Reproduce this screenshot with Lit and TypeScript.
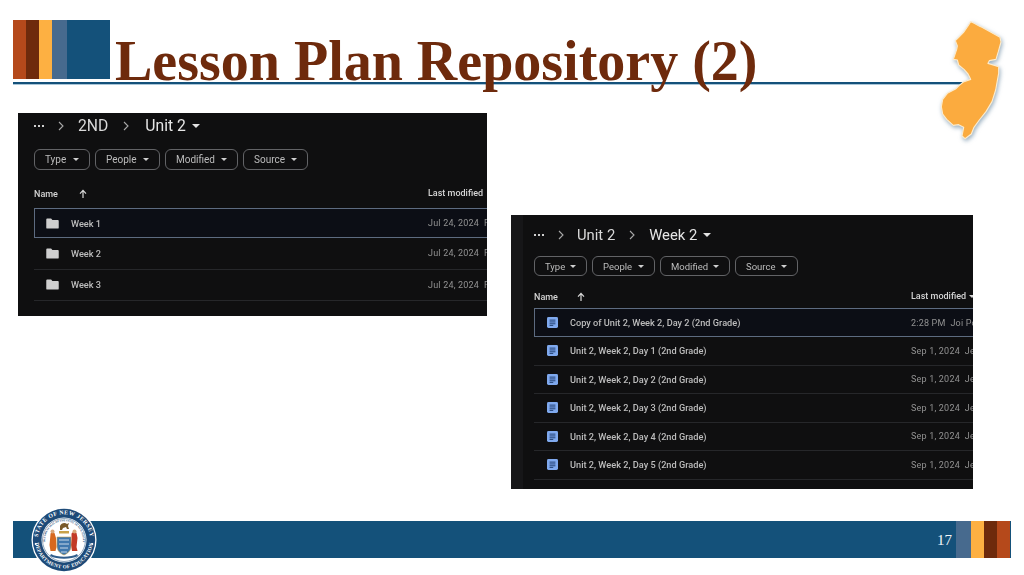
import { LitElement, html, css, svg } from "lit";
import { customElement } from "lit/decorators.js";

const chev = html`<svg class="chev" viewBox="0 0 8 12"><path d="M2 2l4 4-4 4" fill="none" stroke="#a8a8a8" stroke-width="1.1"/></svg>`;
const caret = html`<svg class="caret" viewBox="0 0 8 4"><path d="M0 0h8L4 4z" fill="currentColor"/></svg>`;
const up = html`<svg class="up" viewBox="0 0 10 10"><path d="M5 9V2M2 4.600L5 1.400l3 3.200" fill="none" stroke="#d8d8d8" stroke-width="1.2"/></svg>`;
const folder = html`<svg class="ficon" viewBox="0 0 14 12"><path d="M1.200 0.500h4.300l1.400 1.600h5.900c.6 0 1 .4 1 1v7.400c0 .6-.4 1-1 1H1.200c-.6 0-1-.4-1-1V1.500c0-.6.4-1 1-1z" fill="#cfcfcf"/></svg>`;
const doc = html`<svg class="dicon" viewBox="0 0 12 12"><rect width="12" height="12" rx="1.600" fill="#7fa9ee"/><path d="M2.800 3.400h6.400M2.800 5.400h6.400M2.800 7.400h6.400M2.800 9.200h4" stroke="#1d3a6b" stroke-width="1"/></svg>`;

const seal = svg`
  <defs>
    <path id="ringTop" d="M7.500 41a26.500 26.500 0 1 1 51 0"/>
    <path id="ringBot" d="M4.200 29a29 29 0 1 0 57.600 0"/>
    <path id="ringIn" d="M14.500 37a18.900 18.900 0 1 1 37 0"/>
  </defs>
  <circle cx="33" cy="33" r="32.500" fill="#fff"/>
  <circle cx="33" cy="33" r="31.200" fill="#1d4a78"/>
  <circle cx="33" cy="33" r="22.500" fill="#fff"/>
  <circle cx="33" cy="33" r="21.500" fill="none" stroke="#1d4a78" stroke-width=".5"/>
  <text class="ringtxt" font-size="5.800" letter-spacing=".5"><textPath href="#ringTop" startOffset="50%" text-anchor="middle">STATE OF NEW JERSEY</textPath></text>
  <text class="ringtxt" font-size="5.200" letter-spacing=".3"><textPath href="#ringBot" startOffset="50%" text-anchor="middle">DEPARTMENT OF EDUCATION</textPath></text>
  <text class="ringin" font-size="2.600"><textPath href="#ringIn" startOffset="50%" text-anchor="middle">THE GREAT SEAL OF THE STATE OF NEW JERSEY</textPath></text>
  <circle cx="4.700" cy="37" r="1" fill="#fff"/><circle cx="61.300" cy="37" r="1" fill="#fff"/>
  <path d="M29 19c1-3 5-4 7-2l2-1-1 3 1 3h-2l-1-2-3 1-1 2h-2z" fill="#7a5a2a"/>
  <path d="M28 24h10v2.500H28z" fill="#c9a24a"/>
  <path d="M19.500 27c0-2 3-3 4-1l1.500 5 .5 9-1 4h-5l-1-6z" fill="#d8691f"/>
  <circle cx="21.500" cy="24.500" r="2" fill="#d9a679"/>
  <path d="M40.500 27c0-2 4-3 5-1l1 5-1 9 1 4h-5.500l-1-6 .5-6z" fill="#c23a26"/>
  <circle cx="43.500" cy="24.500" r="2" fill="#d9a679"/>
  <path d="M26 30h14v9c0 5-3.500 7.500-7 9-3.500-1.500-7-4-7-9z" fill="#3f77ad" stroke="#c9a24a" stroke-width=".6"/>
  <path d="M28 33h10M28 37h10M29 41h8M30 45h6" stroke="#c9d9e8" stroke-width="1"/>
  <path d="M20 47c6 3.500 20 3.500 26 0l1 2c-7 3.500-21 3.500-28 0z" fill="#2f5d8c"/>
`;

const map = svg`<path d="M212 35C216 36 230 44 246 52L300 82L303 96L295 125L288 148L268 152L264 160L296 170L296 190L287 240L276 275L258 305L238 330L222 352L214 372L195 386L186 378L191 352L176 344L160 346L140 328L128 312L124 290L128 268L142 250L168 236L178 226L190 216L212 208L204 192L192 178L176 165L172 150L160 148L170 118L172 108L166 92L176 82L190 68L204 48Z" fill="#fbab3f" stroke="#fdeccd" stroke-width="3.500" stroke-linejoin="round"/>`;

interface Panel { cls: string; crumbs: [string, string]; chips: [string, number][]; rows: [string, string][]; icon: unknown; sortCaret: boolean; }

const panels: Panel[] = [
  { cls: "one", crumbs: ["2ND", "Unit 2"], chips: [["Type", 56], ["People", 65], ["Modified", 73], ["Source", 65]], icon: folder, sortCaret: false,
    rows: [["Week 1", "Jul 24, 2024  F"], ["Week 2", "Jul 24, 2024  F"], ["Week 3", "Jul 24, 2024  F"]] },
  { cls: "two", crumbs: ["Unit 2", "Week 2"], chips: [["Type", 53], ["People", 63], ["Modified", 70], ["Source", 63]], icon: doc, sortCaret: true,
    rows: [
      ["Copy of Unit 2, Week 2, Day 2 (2nd Grade)", "2:28 PM  Joi Por"],
      ["Unit 2, Week 2, Day 1 (2nd Grade)", "Sep 1, 2024  Jen"],
      ["Unit 2, Week 2, Day 2 (2nd Grade)", "Sep 1, 2024  Jen"],
      ["Unit 2, Week 2, Day 3 (2nd Grade)", "Sep 1, 2024  Jen"],
      ["Unit 2, Week 2, Day 4 (2nd Grade)", "Sep 1, 2024  Jen"],
      ["Unit 2, Week 2, Day 5 (2nd Grade)", "Sep 1, 2024  Jen"],
    ] },
];

@customElement("app-root")
export class AppRoot extends LitElement {
  static styles = css`
    :host { display: block; width: 1024px; height: 575px; overflow: hidden; background: #fff; }
    .page { position: relative; display: flex; flex-direction: column; height: 575px; }

    .head { display: flex; align-items: flex-start; height: 62px; margin: 20px 59px 0 13px; border-bottom: 2px solid #14517a; box-shadow: 0 1px 0 #a9c6d8; }
    .stripes { display: flex; width: 97px; height: 59px; flex: none; }
    .stripes span, .fstripes span { display: block; height: 100%; }
    .s-rust { width: 13px; background: #b5491b; }
    .s-brown { width: 13px; background: #6e2a0c; }
    .s-gold { width: 13px; background: #fdb042; }
    .s-slate { width: 15px; background: #476a8e; }
    .s-blue { flex: 1; background: #14517a; }
    h1 { margin: 10px 0 0 5px; font: bold 56px/62px "Liberation Serif", serif; color: #6e2a0c; white-space: nowrap; }
    .map { position: absolute; left: 900px; top: 10px; width: 124px; height: 140px; filter: drop-shadow(1px 2px 2px rgba(70,110,140,.55)); }

    .main { display: flex; align-items: flex-start; flex: 1; padding: 29px 0 0 18px; gap: 24px; }
    .panel { position: relative; flex: none; overflow: hidden; background: #0f0f10; color: #e3e3e3; font-family: Roboto, "Liberation Sans", sans-serif; filter: blur(.5px); box-sizing: border-box; }
    .panel.one { width: 469px; height: 203px; padding-left: 16px; }
    .panel.two { width: 462px; height: 274px; margin-top: 102px; padding-left: 23px; }
    .panel.two::before { content: ""; position: absolute; left: 0; top: 0; bottom: 0; width: 12px; background: #161618; }
    .panelin { display: flex; flex-direction: column; }

    .crumbs { position: relative; display: flex; align-items: center; height: 25px; }
    .dots { width: 10px; height: 2px; flex: none; background: radial-gradient(circle at 1px 1px, #cfcfcf 1px, transparent 1.100px) 0 0 / 4px 2px repeat-x; }
    .chev { width: 8px; height: 12px; flex: none; }
    .crumb { line-height: 24px; color: #d9d9d9; }
    .cur { color: #e6e6e6; }
    .crumbs .caret { width: 8px; height: 4px; margin-left: 6px; color: #e3e3e3; }
    .one .crumb { font-size: 15.700px; }
    .one .chev { margin: 0 13px 0 13px; }
    .one .crumb + .chev { margin: 0 15px 0 14px; }
    .two .crumb { font-size: 14.800px; }
    .two .chev { margin: 0 12px 0 13px; }
    .two .crumb + .chev { margin: 0 13px 0 13px; }

    .chips { display: flex; gap: 5px; }
    .chip { display: flex; align-items: center; justify-content: space-between; box-sizing: border-box; padding: 0 10px; border: 1px solid #626366; border-radius: 6px; font-size: 10px; color: #bcbcbc; flex: none; }
    .two .chip { font-size: 9.500px; }
    .chip .caret { width: 6px; height: 3px; color: #cfcfcf; }

    .hdr { display: flex; align-items: center; font-size: 9px; font-weight: 500; color: #d5d5d5; }
    .up { width: 10px; height: 10px; }
    .lm { position: absolute; display: flex; align-items: center; gap: 3px; font-size: 9px; font-weight: 500; color: #d5d5d5; white-space: nowrap; }
    .lm .caret { width: 6px; height: 3px; color: #d5d5d5; }

    .row { position: relative; display: flex; align-items: center; box-sizing: border-box; margin-right: -20px; border-bottom: 1px solid #26272a; font-size: 9.200px; font-weight: 500; color: #bdbdbd; white-space: nowrap; }
    .row.sel { border: 1px solid #5d6b80; background: #0c0e15; }
    .ficon { width: 13px; height: 11px; flex: none; }
    .dicon { width: 11px; height: 11px; flex: none; }
    .date { position: absolute; color: #929292; font-weight: 400; font-size: 9px; white-space: pre; letter-spacing: .2px; }

    .one .chips { margin-top: 11px; height: 21px; }
    .one .hdr { margin-top: 16px; height: 15px; }
    .one .hdr .name { width: 44px; }
    .one .row { height: 31.500px; }
    .one .row.sel { height: 30px; margin-top: 7px; }
    .one .row .ficon { margin: 0 12px 0 12px; }
    .one .row.sel .ficon { margin-left: 11px; }
    .one .date { left: 394px; }
    .one .sel .date { left: 393px; }
    .one .lm { left: 410px; top: 72.500px; height: 15px; }

    .two .crumbs { margin-top: 7px; }
    .two .chips { margin-top: 9px; height: 20px; }
    .two .hdr { margin-top: 13px; height: 16px; }
    .two .hdr .name { width: 42px; }
    .two .row { height: 28.500px; }
    .two .row.sel { height: 29px; margin-top: 3px; }
    .two .row .dicon { margin: 0 12px 0 13px; }
    .two .row.sel .dicon { margin-left: 12px; }
    .two .date { left: 377px; }
    .two .sel .date { left: 376px; }
    .two .lm { left: 400px; top: 73px; height: 16px; }

    .foot { position: relative; display: flex; align-items: center; justify-content: flex-end; height: 37px; margin: 0 13px 17px 13px; background: #14517a; }
    .num { font: 15px/37px "Liberation Serif", serif; color: #f2f6f9; margin-right: 4px; padding-top: 1px; }
    .fstripes { display: flex; width: 55px; height: 100%; }
    .seal { position: absolute; left: 18px; top: -14px; width: 66px; height: 66px; }
    .ringtxt { font-family: "Liberation Serif", serif; font-weight: bold; fill: #fff; }
    .ringin { font-family: "Liberation Serif", serif; font-weight: bold; fill: #1d4a78; }
  `;

  private panel(p: Panel) {
    return html`<section class="panel ${p.cls}">
      <div class="panelin">
        <div class="crumbs">
          <span class="dots"></span>${chev}
          <span class="crumb">${p.crumbs[0]}</span>${chev}
          <span class="crumb cur">${p.crumbs[1]}</span>${caret}
        </div>
        <div class="chips">
          ${p.chips.map(([c, w]) => html`<div class="chip" style="width:${w}px">${c}${caret}</div>`)}
        </div>
        <div class="hdr"><span class="name">Name</span>${up}</div>
        <div class="lm">Last modified${p.sortCaret ? caret : ""}</div>
        ${p.rows.map((r, i) => html`<div class="row ${i === 0 ? "sel" : ""}">${p.icon}<span>${r[0]}</span><span class="date">${r[1]}</span></div>`)}
      </div>
    </section>`;
  }

  render() {
    return html`<div class="page">
      <header class="head">
        <div class="stripes"><span class="s-rust"></span><span class="s-brown"></span><span class="s-gold"></span><span class="s-slate"></span><span class="s-blue"></span></div>
        <h1>Lesson Plan Repository (2)</h1>
      </header>
      <svg class="map" viewBox="0 0 372 420">${map}</svg>
      <main class="main">${panels.map((p) => this.panel(p))}</main>
      <footer class="foot">
        <svg class="seal" viewBox="0 0 66 66">${seal}</svg>
        <span class="num">17</span>
        <div class="fstripes"><span class="s-slate"></span><span class="s-gold"></span><span class="s-brown"></span><span class="s-rust"></span></div>
      </footer>
    </div>`;
  }
}
